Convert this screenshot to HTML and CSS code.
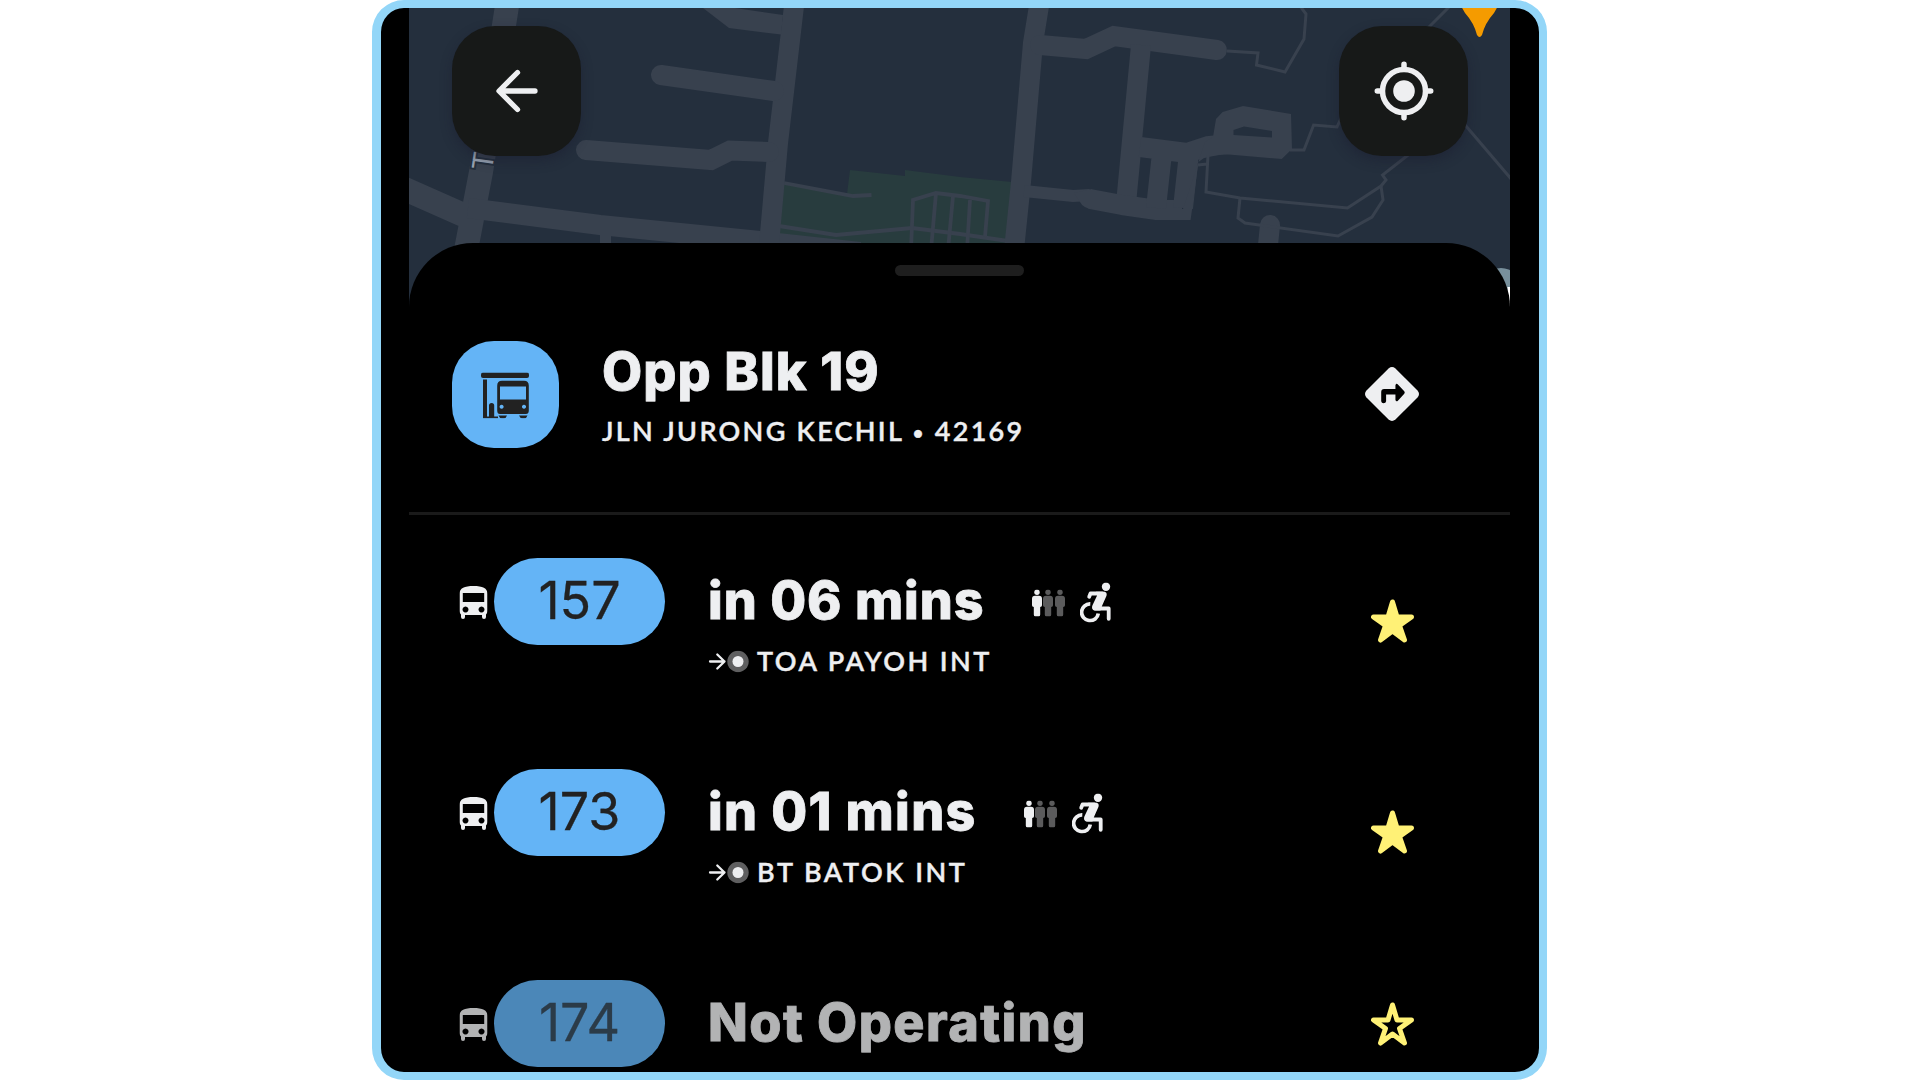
FILE: index.html
```html
<!DOCTYPE html>
<html lang="en">
<head>
<meta charset="utf-8">
<title>Opp Blk 19</title>
<link rel="stylesheet" href="styles.css">
</head>
<body>
<svg class="symbols" aria-hidden="true">
  <symbol id="bus" viewBox="0 0 28 33">
    <path fill="currentColor" fill-rule="evenodd" d="M0 8C0 2 5 0 14 0s14 2 14 8v16.500c0 1.800-.6 3-1.500 4V31a2 2 0 0 1-4 0v-2h-17v2a2 2 0 0 1-4 0v-2.500C.6 27.500 0 26.300 0 24.500zM3.300 7v9h21.400V7zM6 20.400a3 3 0 1 0 .01 0zM22 20.400a3 3 0 1 0 .01 0z"/>
  </symbol>
  <symbol id="person" viewBox="0 0 10 27">
    <circle cx="5" cy="2.700" r="2.700" fill="currentColor"/>
    <path fill="currentColor" d="M3 6.200h4a3 3 0 0 1 3 3v6.500q0 1.500-1.800 1.800V25q0 2-1.500 2H3.300q-1.500 0-1.500-2v-7.500Q0 17.200 0 15.700V9.200a3 3 0 0 1 3-3z"/>
  </symbol>
  <symbol id="wheelchair" viewBox="0 0 31 40">
    <circle cx="26" cy="4.200" r="4.200" fill="currentColor"/>
    <path fill="none" stroke="currentColor" stroke-width="3.800" stroke-linecap="round" stroke-linejoin="round" d="M9.200 14.200 10.500 11h12M14.500 26h14.200v10.300"/>
    <path fill="currentColor" d="M16 9.200h8c2.500 0 3.300 2.300 2.300 4.500L22.200 23l-1.700 5h-5c-3 0-4.200-2.500-3-5.200l4.600-9.800z"/>
    <path fill="none" stroke="currentColor" stroke-width="3.700" d="M10.300 21.400a8.400 8.400 0 1 0 8 9.600"/>
  </symbol>
  <symbol id="star" viewBox="0 0 43 44">
    <path fill="currentColor" stroke="currentColor" stroke-width="5" stroke-linejoin="round" d="M21.500 3 26 18h14.500L28.500 26.500 33.500 41 21.500 32 9.500 41l5-14.500L2.500 18H17z"/>
  </symbol>
  <symbol id="star-outline" viewBox="0 0 43 44">
    <path fill="none" stroke="currentColor" stroke-width="5" stroke-linejoin="round" d="M21.500 3 26 18h14.500L28.500 26.500 33.500 41 21.500 32 9.500 41l5-14.500L2.500 18H17z"/>
  </symbol>
  <symbol id="toward" viewBox="0 0 42 22">
    <path fill="none" stroke="currentColor" stroke-width="2.300" stroke-linecap="round" stroke-linejoin="round" d="M1.500 11H16M8.800 4 16 11l-7.200 7"/>
    <circle cx="29.500" cy="11" r="10.700" fill="#5f5f60"/>
    <circle cx="29.500" cy="11" r="5.500" fill="currentColor"/>
  </symbol>
</svg>

<div class="frame">
  <main class="screen">
    <svg class="map" viewBox="409 8 1101 300" aria-label="Map">
      <rect x="409" y="8" width="1101" height="300" fill="#242f3d"/>
      <path fill="#283c3e" d="M784 182 847 194 850 170 905 176V170L960 177 1012 182 1008 250H864L779 234z"/>
      <g fill="none" stroke="#38414e" stroke-width="3.800">
        <path d="M784 183 853 196 871.500 195"/>
        <path d="M779 226 836 235 912 228 960 234 1008 241"/>
        <path d="M911 250 913 200 936 193 960 196 988 201 985 237M936 193 931 250M953 196 948 250M970 200 967 250"/>
      </g>
      <g fill="none" stroke="#38414e" stroke-width="20">
        <path stroke-width="24" d="M507 6 481 172 466 250M400 187 468 217"/>
        <path d="M468 208 600 225 760 241 860 252"/>
        <path stroke-width="11" d="M605.500 230V250"/>
        <path d="M794 6 778 143 769 245"/>
        <path stroke-linecap="round" d="M661 75 774 91"/>
        <path stroke-linecap="round" d="M586 150 711 160 730 150.500 769 152"/>
        <path d="M1039 6 1033 43 1021 182 1014 250"/>
        <path stroke-linecap="round" d="M1040 45 1086 49 1114 36 1217 50"/>
        <path d="M1141 45 1126 204"/>
        <path stroke-width="12" d="M1024 191 1073 196 1090 195"/>
        <path stroke-linejoin="round" d="M1090 199 1122 205 1157 210 1182 210"/>
        <path d="M1140 147 1187 153 1208 146 1230 144M1162 153 1156 208M1189 153 1183 208"/>
        <path stroke-linecap="round" d="M1270 225 1267 255"/>
      </g>
      <path fill="#38414e" d="M1074 193 1092 189V209Q1083 208 1080 202z"/>
      <path fill="#38414e" d="M703 8H735L783 15 781 34.500 729 28z"/>
      <path fill="#38414e" fill-rule="evenodd" d="M1213 137 1216 119 1222.600 112 1243 106 1291 114 1292 149 1281.700 159 1223 154 1204 158 1198.500 162 1190.600 220H1156V209H1183L1205 142zM1233.500 130V135L1272 137.500V131L1244 126.500z"/>
      <g fill="none" stroke="#38414e" stroke-width="3">
        <path d="M1227 51 1258 53 1256.500 65 1285 72 1304 39 1306 14 1300 6"/>
        <path d="M1290 150H1304L1313.600 125 1337 127 1345 110"/>
        <path d="M1208 155 1206 192 1240 198 1347.500 208 1381 186 1386 180 1382.500 175 1412 152M1198 165 1207 164"/>
        <path d="M1240 198 1238 218 1245 223 1338 236 1372 217 1383 200 1381 186"/>
        <path d="M1420 36 1450 6M1460 119 1512 180"/>
      </g>
      <path fill="#f59b00" d="M1461 6H1498L1494 13Q1485 23 1482 35 1479.500 39 1477 35 1474 23 1465 13z"/>
      <circle cx="1501" cy="288" r="20" fill="#78909c"/>
      <rect x="1507.500" y="287" width="4" height="20" fill="#fff"/>
      <text class="road-name" transform="translate(492 171) rotate(-82)">To</text>
    </svg>

    <nav class="controls">
      <button class="control" aria-label="Back">
        <svg width="46" height="50" viewBox="0 0 46 50" fill="none" stroke="#eeeff1" stroke-width="5.300" stroke-linecap="round" stroke-linejoin="round"><path d="M41 25H6M23.500 6.500 5 25 23.500 43.500"/></svg>
      </button>
      <button class="control" aria-label="My location">
        <svg width="60" height="60" viewBox="0 0 60 60" fill="none" stroke="#eeeff1" stroke-width="5.500"><circle cx="30" cy="30" r="21.500"/><circle cx="30" cy="30" r="10.800" fill="#eeeff1" stroke="none"/><path stroke-linecap="round" d="M30 3.300V8M30 52v4.700M3.300 30H8M52 30h4.700"/></svg>
      </button>
    </nav>

    <section class="sheet">
      <div class="handle"></div>
      <header class="stop">
        <div class="stop-icon">
          <svg width="48" height="46" viewBox="0 0 48 46" fill="#222">
            <rect width="48" height="5.500" rx="2"/>
            <path d="M2 7h4v37H2zM2 44h15v1.800H2zM8 33a2.600 2.600 0 0 1 5.200 0v12H8z"/>
            <path fill-rule="evenodd" d="M21 8.300h22q4.800 0 4.800 5V38q0 3.500-3 3.500H19q-2.800 0-2.800-3.500V13.300q0-5 4.800-5zM19 14v13h26V14zM20.600 32.300a2 2 0 1 0 .01 0zM43 32.300a2 2 0 1 0 .01 0z"/>
            <path d="M17.500 43H26q-1 2.800-3 2.800h-2q-2.500 0-3.500-2.800zM38 43h8.500q-1 2.800-3 2.800h-2q-2.500 0-3.500-2.800z"/>
          </svg>
        </div>
        <div class="stop-text">
          <h1 class="title stop-name">Opp Blk 19</h1>
          <p class="caption stop-road">JLN JURONG KECHIL <span class="dot">•</span> 42169</p>
        </div>
        <svg class="directions" width="54" height="54" viewBox="0 0 55 55"><path fill="#eeeff1" d="M24 1.500q3.500-3 7 0L53.500 24q3 3.500 0 7L31 53.500q-3.500 3-7 0L1.500 31q-3-3.500 0-7z"/><path fill="#000" d="M16.500 25.500q0-3 3-3H31v-4q.8-2.300 2.500-.8l6.500 7q1 1.300 0 2.600l-6.500 7q-1.700 1.500-2.500-.8v-5.500h-9.500v7q-.3 2-2.500 2t-2.500-2z"/></svg>
      </header>

      <ul class="services">
        <li class="service">
          <div class="route"><svg class="bus"><use href="#bus"/></svg><span class="number">157</span></div>
          <div class="arrival">
            <div class="eta"><span class="title eta-06">in 06 mins</span>
              <span class="load"><svg><use href="#person"/></svg><svg class="dim"><use href="#person"/></svg><svg class="dim"><use href="#person"/></svg></span>
              <svg class="wheelchair"><use href="#wheelchair"/></svg></div>
            <div class="destination"><svg><use href="#toward"/></svg><span class="caption to-toa">TOA PAYOH INT</span></div>
          </div>
          <svg class="star"><use href="#star"/></svg>
        </li>
        <li class="service">
          <div class="route"><svg class="bus"><use href="#bus"/></svg><span class="number">173</span></div>
          <div class="arrival">
            <div class="eta"><span class="title eta-01">in 01 mins</span>
              <span class="load"><svg><use href="#person"/></svg><svg class="dim"><use href="#person"/></svg><svg class="dim"><use href="#person"/></svg></span>
              <svg class="wheelchair"><use href="#wheelchair"/></svg></div>
            <div class="destination"><svg><use href="#toward"/></svg><span class="caption to-bt">BT BATOK INT</span></div>
          </div>
          <svg class="star"><use href="#star"/></svg>
        </li>
        <li class="service inactive">
          <div class="route"><svg class="bus"><use href="#bus"/></svg><span class="number">174</span></div>
          <div class="arrival"><div class="eta"><span class="title eta-none">Not Operating</span></div></div>
          <svg class="star"><use href="#star-outline"/></svg>
        </li>
      </ul>
    </section>
  </main>
</div>
</body>
</html>
```
FILE: styles.css
```css
* { box-sizing: border-box; }
html, body { margin: 0; height: 100%; background: #fff; overflow: hidden; }
body { font-family: Inter, "Noto Sans", sans-serif; color: #eeeff1; }
svg { display: block; flex: none; }
.symbols { position: absolute; width: 0; height: 0; }

.frame {
  width: 1175px;
  height: 1080px;
  margin-left: 372px;
  padding: 0 29px 0 28px;
  border: 8px solid #93d6f8;
  border-left-width: 9px;
  border-radius: 32px;
  background: #000;
  overflow: hidden;
}
.screen { position: relative; width: 1101px; height: 1064px; }
.map { position: absolute; inset: 0 0 auto; width: 1101px; height: 300px; }
.road-name {
  font: 29px Roboto, sans-serif;
  fill: #98a3b2;
  stroke: #242f3d;
  stroke-width: 4px;
  paint-order: stroke;
}

.controls { position: relative; display: flex; justify-content: space-between; height: 235px; padding: 18px 42px 0 43px; }
.control {
  display: flex;
  align-items: center;
  justify-content: center;
  width: 129px;
  height: 130px;
  padding: 0;
  border: 0;
  border-radius: 43px;
  background: #171918;
  box-shadow: 0 5px 12px rgba(25, 25, 45, .4);
}

.sheet { position: relative; height: 829px; border-radius: 64px 64px 0 0; background: #000; overflow: hidden; }
.handle { width: 129px; height: 11px; margin: 22px auto 0; border-radius: 6px; background: #1e1e1e; }
.stop { display: flex; align-items: center; height: 239px; padding: 0 90px 0 43px; border-bottom: 3px solid #1a1a1a; }
.stop-icon {
  display: flex;
  align-items: center;
  justify-content: center;
  width: 107px;
  height: 107px;
  border-radius: 42px;
  background: #64b4f6;
}
.stop-icon svg { transform: translate(-1px, 1.500px); }
.stop-text { flex: 1; margin-left: 43px; }
.stop-name { margin-bottom: 11px; letter-spacing: 1.100px; }
.directions { margin-right: 1px; }

.title { font-size: 52px; line-height: 64px; font-weight: 800; white-space: nowrap; -webkit-text-stroke: .8px currentColor; }
h1.title { margin-top: 0; }
.caption { margin: 0; font-family: Lato, "Noto Sans", sans-serif; font-size: 27px; line-height: 32px; font-weight: 600; white-space: nowrap; -webkit-text-stroke: .4px currentColor; }
.stop-road { letter-spacing: 2.300px; }
.dot { font-size: 19px; vertical-align: 1px; }
.eta-06 { letter-spacing: 1px; }
.eta-01 { letter-spacing: 1.350px; }
.eta-none { letter-spacing: 1.450px; }
.to-toa { letter-spacing: 2.500px; }
.to-bt { letter-spacing: 2.550px; }

.services { margin: 0; padding: 0; list-style: none; }
.service { display: flex; height: 211px; padding: 42.500px 96px 0 50px; }
.route { display: flex; align-items: center; height: 87px; }
.bus { width: 28px; height: 33px; margin-right: 7px; transform: translate(.5px, 1px); }
.number {
  width: 171px;
  height: 87px;
  border-radius: 44px;
  background: #64b4f6;
  color: #222;
  font-size: 52px;
  line-height: 85px;
  text-align: center;
  -webkit-text-stroke: .3px currentColor;
}
.arrival { flex: 1; margin-left: 43px; }
.eta { display: flex; align-items: center; height: 87px; }
.load { display: flex; gap: 1.500px; margin-left: 47px; }
.load svg { width: 10px; height: 27px; transform: translateY(1.500px); }
.dim { opacity: .38; }
.wheelchair { width: 31px; height: 40px; margin-left: 15px; transform: translateY(1.500px); }
.destination { display: flex; align-items: center; height: 33px; }
.destination svg { width: 42px; height: 22px; margin-right: 7px; transform: translate(.5px, .5px); }
.star { width: 43px; height: 44px; margin-top: 41.500px; color: #fff176; }
.inactive .route, .inactive .arrival { opacity: .75; }
.inactive .number { color: #3a4f60; }
.inactive .star { margin-top: 22.500px; }
```
